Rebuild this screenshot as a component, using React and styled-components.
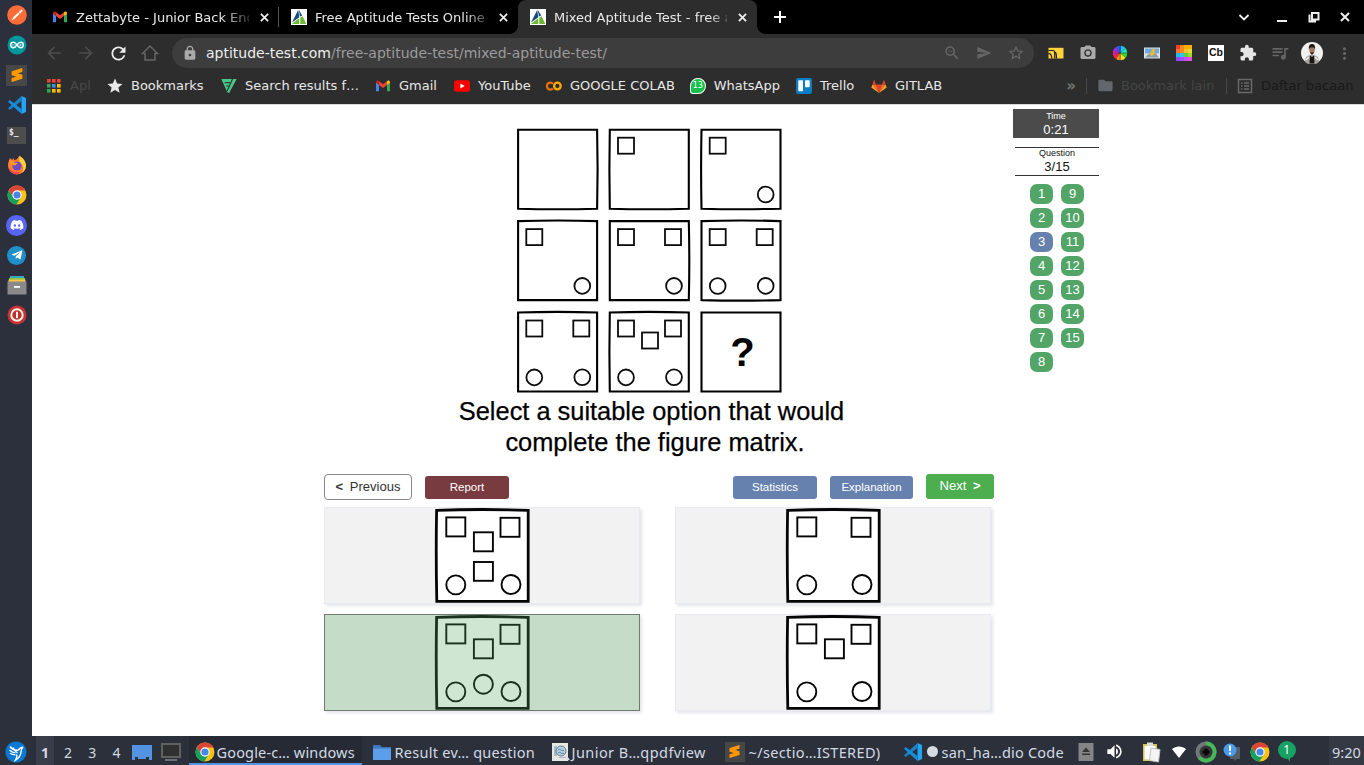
import React from "react";
import styled, { createGlobalStyle, css } from "styled-components";
import {
  MdSend, MdLock, MdStar, MdStarBorder, MdRefresh, MdArrowBack, MdArrowForward, MdCameraAlt,
  MdExtension, MdQueueMusic, MdMoreVert, MdFolder, MdVolumeUp, MdZoomOut,
} from "react-icons/md";
import { FaDiscord, FaTelegramPlane } from "react-icons/fa";
import { SiSublimetext } from "react-icons/si";

const GlobalStyle = createGlobalStyle`
  * { box-sizing: border-box; }
  body { margin: 0; background: #fff; overflow: hidden; }
  button { font: inherit; padding: 0; margin: 0; border: 0; background: none; color: inherit; }
  svg { display: block; flex: none; }
`;

/* ---------- desktop shell ---------- */
const Desktop = styled.div`
  width: 1364px;
  height: 765px;
  display: grid;
  grid-template: 736px 29px / 32px 1332px;
`;
const Dock = styled.nav`
  background: #2c303c;
  display: flex;
  flex-direction: column;
  align-items: center;
  padding-left: 1px;
`;
const DockItem = styled.div`
  height: 30px;
  display: grid;
  place-items: center;
`;
const Browser = styled.main`
  display: flex;
  flex-direction: column;
  font-family: "DejaVu Sans", sans-serif;
  font-size: 13px;
  color: #e8e8e8;
`;

/* ---------- browser chrome ---------- */
const TabStrip = styled.div`
  height: 34px;
  background: #000;
  display: flex;
  align-items: stretch;
  padding-left: 8px;
`;
const Tab = styled.div`
  width: 239px;
  display: flex;
  align-items: center;
  padding: 0 7px 0 12px;
  position: relative;
  ${(p) => p.$active && css`
    background: #2d2d2d;
    border-radius: 8px 8px 0 0;
    &::before, &::after {
      content: "";
      position: absolute;
      bottom: 0;
      width: 8px;
      height: 8px;
    }
    &::before { left: -8px; background: radial-gradient(circle at 0 0, transparent 7.5px, #2d2d2d 8px); }
    &::after { right: -8px; background: radial-gradient(circle at 100% 0, transparent 7.5px, #2d2d2d 8px); }
  `}
  ${(p) => p.$divider && css`
    background: linear-gradient(#555, #555) right center / 1px 20px no-repeat;
  `}
`;
const TabTitle = styled.span`
  width: 175px;
  margin-left: 8px;
  overflow: hidden;
  white-space: nowrap;
  mask-image: linear-gradient(90deg, #000 ${(p) => p.$fade}px, transparent 180px);
`;
const TabClose = styled.button`
  width: 16px;
  height: 16px;
  margin-left: 7px;
  display: grid;
  place-items: center;
`;
const NewTab = styled.button`
  width: 22px;
  margin-left: 12px;
  display: grid;
  place-items: center;
`;
const WindowButtons = styled.div`
  margin-left: auto;
  display: flex;
  align-items: center;
  padding-right: 1px;
`;
const WindowButton = styled.button`
  width: ${(p) => p.$width}px;
  display: grid;
  place-items: center;
`;
const Toolbar = styled.div`
  height: 38px;
  background: #2d2d2d;
  display: flex;
  align-items: center;
  padding: 0 3px 0 6px;
`;
const ToolButton = styled.button`
  width: 32px;
  height: 32px;
  flex: none;
  display: grid;
  place-items: center;
  color: ${(p) => p.$color || "#555"};
`;
const AddressBar = styled.div`
  width: 862px;
  height: 30px;
  margin: 0 6px;
  border-radius: 15px;
  background: #3d3d3d;
  display: flex;
  align-items: center;
  padding: 0 2px 0 10px;
  font-size: 14px;
  color: #9b9b9b;
`;
const Url = styled.span`
  margin-left: 8px;
  flex: 1;
  white-space: nowrap;
`;
const Host = styled.span`color: #eee;`;
const BookmarkBar = styled.div`
  height: 32px;
  background: #2d2d2d;
  display: flex;
  align-items: center;
  gap: 16px;
  padding: 0 12px 5px 14px;
`;
const Bookmark = styled.a`
  display: flex;
  align-items: center;
  gap: 8px;
  white-space: nowrap;
  color: ${(p) => p.$color || "#e8e8e8"};
  ${(p) => p.$width && css`width: ${p.$width}px;`}
`;
const BookmarkEnd = styled.div`
  margin-left: auto;
  display: flex;
  align-items: center;
  gap: 10px;
  color: #777;
`;
const Overflow = styled.span`
  font-size: 15px;
  font-weight: 700;
  line-height: 16px;
`;
const Rule = styled.i`
  width: 1px;
  height: 16px;
  background: #484848;
`;

/* ---------- page ---------- */
const Page = styled.section`
  flex: 1;
  border-top: 1px solid #d8d8d8;
  background: #fff;
  display: flex;
  align-items: flex-start;
  padding-left: 292px;
  font-family: "Liberation Sans", Arial, sans-serif;
  color: #111;
`;
const Quiz = styled.div`
  width: 670px;
  padding-top: 22px;
`;
const Matrix = styled.div`
  padding-left: 191px;
  height: 269px;
`;
const Prompt = styled.p`
  margin: 0 0 0 -15px;
  font-size: 25.4px;
  line-height: 31px;
  text-align: center;
  color: #000;
  -webkit-text-stroke: 0.25px #000;
`;
const PromptLine = styled.span`
  display: block;
  padding-left: ${(p) => p.$indent || 0}px;
`;
const Actions = styled.div`
  margin-top: 16px;
  height: 26px;
  display: flex;
  align-items: center;
  gap: 13px;
`;
const Button = styled.button`
  width: ${(p) => p.$width || 84}px;
  height: 23px;
  border-radius: 3px;
  font-size: 11.5px;
  color: #fff;
  background: ${(p) => p.$bg || "#6681ae"};
`;
const PreviousButton = styled(Button)`
  height: 26px;
  border: 1px solid #888;
  border-radius: 4px;
  background: #fff;
  color: #333;
  font-size: 13px;
  word-spacing: 3px;
  padding-bottom: 2px;
`;
const NextButton = styled(Button)`
  height: 25px;
  margin-bottom: 1px;
  font-size: 13px;
  word-spacing: 3px;
  padding-bottom: 2px;
`;
const Spacer = styled.div`flex: 1;`;
const Options = styled.div`
  margin-top: 7px;
  display: grid;
  grid-template-columns: 316px 316px;
  gap: 10px 35px;
`;
const Option = styled.button`
  height: 97px;
  display: grid;
  place-items: center;
  background: #f2f2f2;
  border: 1px solid #e9eaf0;
  box-shadow: 2px 2px 3px rgba(60, 70, 110, 0.14);
  position: relative;
  ${(p) => p.$selected && css`
    border-color: #6f7a70;
    &::after {
      content: "";
      position: absolute;
      inset: 0;
      background: rgba(80, 165, 95, 0.28);
    }
  `}
`;
const Status = styled.aside`
  margin-left: 19px;
  width: 86px;
  padding-top: 4px;
  display: flex;
  flex-direction: column;
`;
const StatusBox = styled.div`
  height: 29px;
  text-align: center;
  font-size: 13px;
  line-height: 14px;
  ${(p) => p.$dark
    ? css`background: #4b4b4b; color: #fff;`
    : css`margin: 9px 0 0 2px; border: solid #333; border-width: 1px 0; line-height: 18px;`}
`;
const StatusLabel = styled.div`
  font-size: 9px;
  line-height: ${(p) => p.$line || 14}px;
`;
const QuestionList = styled.div`
  margin: 8px 0 0 17px;
  display: grid;
  grid-auto-flow: column;
  grid-template-rows: repeat(8, 20px);
  grid-template-columns: 23px 23px;
  gap: 4px 8px;
`;
const QuestionBadge = styled.button`
  border-radius: 7px;
  background: ${(p) => (p.$current ? "#6681ae" : "#53a567")};
  color: #fff;
  font-size: 13px;
  line-height: 20px;
`;

/* ---------- taskbar ---------- */
const Taskbar = styled.footer`
  grid-column: 1 / 3;
  background: #2b303b;
  display: flex;
  align-items: stretch;
  padding-left: 5px;
  font-family: "Noto Sans", sans-serif;
  font-size: 14px;
  color: #d3dae3;
`;
const Slot = styled.div`
  width: ${(p) => p.$width}px;
  margin-left: ${(p) => p.$before || 0}px;
  padding-top: 2px;
  flex: none;
  display: grid;
  place-items: center;
`;
const Workspace = styled(Slot)`
  width: 24.2px;
  padding-top: 4px;
  ${(p) => p.$active && css`
    width: 18px;
    margin-right: 2px;
    font-weight: 700;
    background: #383d49;
  `}
`;
const Task = styled.div`
  width: ${(p) => p.$width}px;
  flex: none;
  display: flex;
  align-items: center;
  padding: 4px 0 0 6px;
  white-space: nowrap;
  letter-spacing: ${(p) => p.$spacing || 0}px;
  border-bottom: 2px solid ${(p) => (p.$active ? "#5294e2" : "transparent")};
  background: ${(p) => (p.$active ? "#262a34" : "transparent")};
`;
const TaskLabel = styled.span`
  display: flex;
  align-items: center;
  margin-left: ${(p) => p.$gap || 3}px;
  font-size: 14.5px;
`;
const UnsavedDot = styled.i`
  width: 11px;
  height: 11px;
  margin-right: 4px;
  border-radius: 50%;
  background: #d3dae3;
`;
const Clock = styled.time`
  margin-left: auto;
  width: 35px;
  background: #343944;
  padding-left: 3px;
  font-size: 14.5px;
  line-height: 32px;
  white-space: nowrap;
`;

/* ---------- icons ---------- */
const Svg = ({ s = 16, w, h, v = 16, children }) => (
  <svg width={w || s} height={h || s} viewBox={`0 0 ${v} ${v}`} fill="none">{children}</svg>
);
const Gmail = () => (
  <Svg>
    <path d="M1 4v9.2h3V6.8z" fill="#4285f4" /><path d="M12 6.8v6.4h3V4z" fill="#34a853" />
    <path d="M12 3.2V7l3-2.3V4c0-1.4-1.5-1.9-2.4-1.2z" fill="#fbbc04" />
    <path d="M4 7V3.3l4 3 4-3V7l-4 3z" fill="#ea4335" /><path d="M1 4.6 4 7V3.3l-.6-.5C2.400 2.200 1 2.800 1 4z" fill="#c5221f" />
  </Svg>
);
const AptitudeLogo = () => (
  <Svg>
    <path d="M0 0h16v16H0z" fill="#fff" />
    <path d="M7.200 1 1 13.500 8.300 8.200z" fill="#164a7b" />
    <path d="M7.800 .8 8.900 7.400l2.300-.8z" fill="#164a7b" />
    <path d="M.8 15 8.200 9.300V15zM9.300 15V8.400l2.300-1.200L15.300 15z" fill="#6db833" />
  </Svg>
);
const Cross = ({ s = 9 }) => <Svg s={s} v={10}><path d="m1 1 8 8M9 1 1 9" stroke="#eee" strokeWidth="2" /></Svg>;
const HomeIcon = () => <Svg s={18} v={18}><path d="M1.500 9.500 9 2l7.500 7.500H14V16H4V9.500z" stroke="#666" strokeWidth="1.500" /></Svg>;
const Chrome = ({ s = 20 }) => (
  <Svg s={s} v={20}>
    <circle cx="10" cy="10" r="9.500" fill="#fbc116" />
    <path d="M10 .5A9.500 9.500 0 0 0 1.800 5.200L6.200 12 10 5.500h8.400A9.500 9.500 0 0 0 10 .5" fill="#dc4437" />
    <path d="M1.800 5.200A9.500 9.500 0 0 0 9.400 19.500L14 12l-4 2.500a5 5 0 0 1-4-2.500z" fill="#16a05d" />
    <circle cx="10" cy="10" r="4.700" fill="#fff" /><circle cx="10" cy="10" r="3.600" fill="#4587e8" />
  </Svg>
);
const Postman = () => (
  <Svg s={20} v={20}><circle cx="10" cy="10" r="9.800" fill="#ff6c37" />
    <path d="m4.500 15.500 2-3.500 4.700-4.400 1.400 1.400-4.700 4.600z" fill="#fff" />
    <path d="M11.700 7.200 14.700 4.300l1 1.500-2.600 2.700z" fill="#fff" />
  </Svg>
);
const Arduino = () => (
  <Svg s={20} v={20}><circle cx="10" cy="10" r="9.500" fill="#00979d" />
    <path d="M10 10C8.500 8 7.700 7.300 6.400 7.300a2.700 2.700 0 0 0 0 5.400c1.300 0 2.100-.7 3.600-2.700s2.300-2.700 3.600-2.700a2.700 2.700 0 0 1 0 5.400c-1.300 0-2.100-.7-3.600-2.700" stroke="#fff" strokeWidth="1.400" />
    <path d="M5.300 10h2.200m5 0h2.200m-1.100-1.100v2.200" stroke="#fff" strokeWidth=".7" />
  </Svg>
);
const Tile = styled.div`
  width: ${(p) => p.$size}px;
  height: ${(p) => p.$size}px;
  display: grid;
  place-items: center;
  background: #474747;
  color: #ff9800;
`;
const Sublime = ({ size = 20 }) => <Tile $size={size}><SiSublimetext size={size - 7} /></Tile>;
const Code = () => (
  <Svg s={20} v={20}>
    <path d="m14.500 1 4.500 2v14l-4.500 2z" fill="#24a5f2" />
    <path d="M14.500 1 1 13.200l1.700 1.800L14.500 6z" fill="#1b80c4" /><path d="M14.500 19 1 6.800 2.700 5l11.800 9z" fill="#168ddb" />
  </Svg>
);
const TerminalTile = styled.div`
  width: 19px;
  height: 17px;
  padding: 1px 0 0 2px;
  background: #4d4d4d;
  color: #eee;
  font: 700 8px/9px "DejaVu Sans Mono", monospace;
`;
const Firefox = () => (
  <Svg s={20} v={20}>
    <path d="M2 5.500 3 3l2 2 2-2v2.300c5-1 4-4 5.500-4.800C13 3 18.500 4.500 19 11a9 9 0 0 1-9 8.500A9 9 0 0 1 1 11c0-2 .3-4 1-5.500" fill="#ff812e" />
    <path d="M13 1c2.500 2 6 4.500 6 10 0 3-2 5.500-4 6.700 2-3 1.800-7-1.500-9.700-1.400-1.200-1.900-4.400-.5-7" fill="#ffcf3d" />
    <circle cx="10" cy="11" r="4.600" fill="#6f4bc1" /><path d="M2 6c2.500-.7 4 .3 5.500 1.800L11 8 8 10.500c-3 0-4-2-6-4.500" fill="#ff9a24" />
    <path d="M1.300 11.500c1.400 4.500 7 6.500 12.500 5A9 9 0 0 1 10 19.500a9 9 0 0 1-8.700-8" fill="#f5464e" />
  </Svg>
);
const Disc = styled.div`
  width: ${(p) => p.$size || 20}px;
  height: ${(p) => p.$size || 20}px;
  border-radius: 50%;
  background: ${(p) => p.$bg};
  color: #fff;
  display: grid;
  place-items: center;
`;
const Drawer = () => (
  <Svg s={20} v={20}><path d="M3 1h14v4H3z" fill="#36a8be" /><path d="M2 3h16v2H2z" fill="#8bc34a" /><path d="M1.500 4.600h17v2.400h-17z" fill="#f9c846" />
    <path d="M.5 6.500h19v13H.5z" fill="#8a8a8a" /><path d="M7 11h6v1.800H7z" fill="#fff" /></Svg>
);
const Power = () => (
  <Svg s={20} v={20}><circle cx="10" cy="10" r="9.500" fill="#c43338" /><circle cx="10" cy="10" r="5.700" fill="#b82f35" stroke="#fff4dc" strokeWidth="2" />
    <path d="M10 6.700v6.600" stroke="#fff4dc" strokeWidth="2" /></Svg>
);
const AppsGrid = () => (
  <Svg>{["#ea4335", "#ea4335", "#ea4335", "#34a853", "#4285f4", "#fbbc05", "#34a853", "#fbbc05", "#fbbc05"].map((c, i) => (
    <rect key={i} x={1 + (i % 3) * 5} y={1 + Math.floor(i / 3) * 5} width="3.600" height="3.600" fill={c} />
  ))}</Svg>
);
const GreenMark = () => (
  <Svg><path d="M.3 1h15.400L8 15.200 6.200 14z" fill="#48c78b" /><path d="m3.500 4.700 5.500-.1M5.200 8h3M11.500 1 6.200 13" stroke="#2d2d2d" strokeWidth="1.100" /></Svg>
);
const YouTube = () => <Svg><rect y="2.300" width="16" height="11.400" rx="2.700" fill="#f00" /><path d="m6.400 5.500 4.300 2.500-4.300 2.500z" fill="#fff" /></Svg>;
const Colab = () => <Svg><g strokeWidth="2.300"><path d="M7 5.700a3.500 3.500 0 1 0 0 4.700" stroke="#e8710a" /><circle cx="11.400" cy="8" r="3.300" stroke="#f9ab00" /></g></Svg>;
const WaMark = styled.div`
  width: 16px;
  height: 16px;
  border: 1.5px solid #fff;
  border-radius: 50% 50% 50% 3px;
  background: #17c04c;
  color: #fff;
  text-align: center;
  font: 8px/14px "DejaVu Sans", sans-serif;
`;
const Trello = () => <Svg><rect width="16" height="16" rx="2" fill="#0b7dc4" /><rect x="2.300" y="2.300" width="4.700" height="11" rx=".8" fill="#fff" /><rect x="9" y="2.300" width="4.700" height="7" rx=".8" fill="#fff" /></Svg>;
const GitLab = () => (
  <Svg><path d="m8 15 3-8.500H5z" fill="#e24329" /><path d="M8 15 1.500 6.500H5zM8 15l6.500-8.500H11z" fill="#fc6d26" />
    <path d="m1.500 6.500-1.200 3L8 15zM14.500 6.500l1.200 3L8 15z" fill="#fca326" /><path d="M3 1.500 1.500 6.500H5zM13 1.500l1.500 5H11z" fill="#e24329" /></Svg>
);
const ReadingList = () => <Svg><path d="M1.500 1.500h13v13h-13z" stroke="#6a6a6a" strokeWidth="1.500" /><path d="M4 5h1.500m1.500 0h5M4 8h1.500m1.500 0h5m-8 3h1.500m1.500 0h5" stroke="#6a6a6a" strokeWidth="1.300" /></Svg>;
const CastIcon = () => (
  <Svg><path d="M.5 2.800h15v10.700H.5z" fill="#ffd33d" /><path d="M.5 5.500h4.700c1 0 1.500.6 1.500 2v6M.5 8.300c2 .2 3.300 2 3.300 5.200M5.800 7.200c1.800-.9 2.700.3 2.700 6.300" stroke="#29230f" strokeWidth="1.200" /></Svg>
);
const ColorWheel = () => (
  <Svg>{["#1de9b6", "#16c7f5", "#2864f0", "#8a32e8", "#f022b8", "#f4283b", "#ff9820", "#f7e322", "#32d52f"].map((c, i) => {
    const a = ((8 - i) * 40 * Math.PI) / 180, b = ((9 - i) * 40 * Math.PI) / 180;
    return <path key={c} d={`M8 8L${8 + 7.300 * Math.cos(a)} ${8 + 7.300 * Math.sin(a)}A7.300 7.300 0 0 1 ${8 + 7.300 * Math.cos(b)} ${8 + 7.300 * Math.sin(b)}z`} fill={c} />;
  })}<path d="M8 0v16M0 8h16" stroke="#222" strokeWidth=".5" /></Svg>
);
const PictureIcon = () => <Svg><path d="M0 2.500h16v11H0z" fill="#d9e3ec" /><path d="M1 3.500h14v5H1z" fill="#78a9dd" /><path d="m1 12.500 4-4 3 2 3-3 4 5z" fill="#8e9ba0" /><path d="M6 9 9 3l2 2-1 5-3 1z" fill="#e8bc2d" /></Svg>;
const Palette = () => (
  <Svg>{["#ff3d2e", "#ff8a1e", "#ffb100", "#ffb100", "#ff7038", "#ff8a1e", "#ffbd2d", "#e2db32", "#26b8e8", "#35c3ed", "#5dd13d", "#a4d629", "#8e4bf2", "#a84bf2", "#c74cf2", "#e34ae8"].map((c, i) => (
    <rect key={i} x={(i % 4) * 4} y={Math.floor(i / 4) * 4} width="4" height="4" fill={c} />
  ))}</Svg>
);
const CbMark = styled.div`
  width: 16px;
  height: 16px;
  background: #fff;
  color: #111;
  text-align: center;
  font: 700 10.500px/15px "Liberation Sans", sans-serif;
`;
const Avatar = () => (
  <Svg s={22} v={22}><circle cx="11" cy="11" r="11" fill="#f2f1f1" /><path d="M4 20c.2-5 2-7 7-7s6.800 2 7 7a11 11 0 0 1-14 0" fill="#a79f9f" />
    <path d="m9 13.500 2 1.500 2-1.500.5 8h-5z" fill="#171717" /><ellipse cx="11" cy="8.300" rx="2.600" ry="4" fill="#a37761" />
    <path d="M8 8c-.6-4 .5-6 3-6s3.600 2 3 6l-1-2.500H9zM9 10.500h4L11 13z" fill="#211b1a" />
    <path d="m5 18 3-3m9 3-3-3" stroke="#f5eeee" strokeWidth="1.500" /></Svg>
);
const Lubuntu = () => (
  <Svg s={22} v={22}><circle cx="11" cy="11" r="10.600" fill="#0878d4" />
    <path d="M5 5.500c2 3 4.500 4 8 3.800 1.300-1.800 2.700-2.800 5-3.300-1.300 1-1.700 2-1.800 4-.3 4-2 7-5.700 9 1.300-2.300 1.700-4.300.8-5.500" stroke="#fff" strokeWidth="1.500" />
    <path d="M4.500 9c1.500 1.700 3.500 2.500 6 3M5 12.300c1.500 1 3.300 1.500 5.500 1.500M8 6.500c1 2.300 2.500 4 4.500 5.500" stroke="#fff" strokeWidth="1.200" />
  </Svg>
);
const DesktopIcon = () => <Svg s={22} v={22}><path d="M1 4h20v15h-3v-3h-3v2H7v-2H4v3H1z" fill="#5294e2" /></Svg>;
const MonitorIcon = () => <Svg s={22} v={22}><path d="M2 3h18v13H2z" fill="#303030" stroke="#606060" strokeWidth="2" /><path d="M5 19h12" stroke="#707070" strokeWidth="2" /></Svg>;
const FolderIcon = () => <Svg s={20} v={20}><path d="M1 3h7l2 2h9v13H1z" fill="#3d78be" /><path d="M1 6.500h18V18H1z" fill="#5c9eea" /></Svg>;
const PdfIcon = () => <Svg s={20} v={20}><path d="M2 1h16v18H2z" fill="#e7e7e3" /><path d="M4 4h3v10H4zM9 15h7v1H9z" fill="#a7bdcb" /><circle cx="11" cy="9" r="5" fill="#b2cfdf" stroke="#6b7e8a" /><path d="M8 8c2-2 4 2 6 0M8 11c2-2 4 2 6 0" stroke="#56839e" /><path d="m15 13 4 5" stroke="#ddd" strokeWidth="2" /></Svg>;
const EjectIcon = () => <Svg s={20} v={20}><path d="M2.500 1h15v18h-15z" fill="#858585" /><path d="m6 10 4-4.500 4 4.500zM6 11.500h8V13H6z" fill="#353535" /></Svg>;
const ClipboardIcon = () => <Svg s={22} v={22}><path d="M2 3h14v17H2z" fill="#d4c35a" /><path d="M3.500 5h11v13.500h-11z" fill="#fff" /><path d="M6 1.500h6v3.500H6z" fill="#ddd" /><path d="m10 7 9 1.500-1.500 12.500-9-1.500z" fill="#f4f4f4" stroke="#c2c2c2" /></Svg>;
const WifiIcon = () => <Svg s={16}><path d="M1 5c4-3.500 10-3.500 14 0l-7 9z" fill="#fff" /></Svg>;
const GreenDial = () => <Svg s={22} v={22}><circle cx="11" cy="11" r="10.500" fill="#72777b" /><path d="M11 .5a10.500 10.500 0 1 1-8 17.300L6 15a6.500 6.500 0 1 0 5-10.500z" fill="#45ba54" /><circle cx="11" cy="11" r="6.500" fill="#343737" /><path d="M11 7.500v7m-3.500-3.500h7" stroke="#000" strokeWidth="3" /></Svg>;
const NoticeIcon = () => <Svg s={20} v={20}><path d="M8 5h10v12h-3l-3 2v-2H8z" fill="#555c65" /><circle cx="8" cy="8" r="6.500" fill="#4a9ce8" /><path d="M8 3.500V9m0 1.500v2" stroke="#fff" strokeWidth="2" /></Svg>;
const BubbleMark = styled.div`
  width: 18px;
  height: 18px;
  margin-bottom: 3px;
  border-radius: 50%;
  background: #17a163;
  position: relative;
  text-align: center;
  font: 12px/18px "Noto Sans", sans-serif;
  color: #fff;
  &::after {
    content: "";
    position: absolute;
    left: 8px;
    top: 15px;
    border: solid transparent;
    border-width: 0 4px 6px 0;
    border-right-color: #17a163;
  }
`;

/* ---------- puzzle figures ---------- */
/* Marks sit in an 80x80 cell: tl/tr/bl/br corners and c upper centre. */
const MATRIX = [
  [[], ["tl"], ["tl", "br"]],
  [["tl", "br"], ["tl", "tr", "br"], ["tl", "tr", "bl", "br"]],
  [["tl", "tr", "bl", "br"], ["tl", "tr", "c", "bl", "br"], null],
];
/* Each frame bows outwards slightly on the listed sides. */
const BOWS = [["r", "b"], ["l", "b"], ["l", "b"], ["t"], ["r"], ["t", "b"], ["t"], ["t", "l"], []];
const framePath = (bows) => {
  const has = (side) => bows.includes(side);
  return `M0 0Q39.500 ${has("t") ? -1.200 : 0} 79 0Q${has("r") ? 80 : 79} 40 79 79Q39.500 ${has("b") ? 80 : 79} 0 79Q${has("l") ? -0.800 : 0} 40 0 0z`;
};
const MatrixFigure = () => (
  <svg width="270" height="270" viewBox="515 127 270 270" fill="none" stroke="#0c0c0c" strokeWidth="1.800">
    {MATRIX.map((row, r) => row.map((marks, c) => {
      const x = 518.100 + c * 91.700;
      const y = 129.700 + r * 91.400;
      return (
        <g key={`${r}${c}`} transform={`translate(${x} ${y})`}>
          <path d={framePath(BOWS[r * 3 + c])} strokeWidth="2.100" stroke="#000" />
          {marks ? marks.map((m) => {
            if (m === "bl") return <circle key={m} cx="16.200" cy="64.900" r="7.900" />;
            if (m === "br") return <circle key={m} cx="64.200" cy="64.800" r="7.900" />;
            const [mx, my] = { tl: [8.200, 8], tr: [55.200, 8], c: [32.200, 20] }[m];
            return <rect key={m} x={mx} y={my} width="16" height="16" />;
          }) : (
            <text x="41" y="39.800" dominantBaseline="central" textAnchor="middle" fill="#000" stroke="none" fontFamily="Liberation Sans" fontWeight="700" fontSize="40">?</text>
          )}
        </g>
      );
    }))}
  </svg>
);
const OptionFigure = ({ marks }) => (
  <svg width="96" height="95" viewBox="0 0 96 95" fill="none" stroke="#050505" strokeWidth="1.900">
    <path d="M2.600 2.400Q48 .6 94.200 2.400V93.300H2.800Q1.800 48 2.600 2.400z" fill="#fff" strokeWidth="2.800" />
    <rect x="12.300" y="9.400" width="19" height="19" />
    <rect x="66.500" y="9.800" width="19" height="19" />
    {marks.includes("c") && <rect x="39.900" y="24.300" width="19" height="19" />}
    {marks.includes("s") && <rect x="39.900" y="54" width="19" height="18.800" />}
    {marks.includes("o") && <circle cx="49.400" cy="69.200" r="9.500" />}
    <circle cx="21.800" cy="76.900" r="9.500" />
    <circle cx="77" cy="76.500" r="9.500" />
  </svg>
);

const TABS = [
  { title: "Zettabyte - Junior Back End", icon: <Gmail />, fade: 145, divider: true },
  { title: "Free Aptitude Tests Online", icon: <AptitudeLogo />, fade: 150 },
  { title: "Mixed Aptitude Test - free apt", icon: <AptitudeLogo />, fade: 155, active: true },
];
const BOOKMARKS = [
  { label: "Apl", icon: <AppsGrid />, color: "#484848", width: 45 },
  { label: "Bookmarks", icon: <MdStar size={18} style={{ margin: -1 }} />, width: 98 },
  { label: "Search results f…", icon: <GreenMark />, width: 138 },
  { label: "Gmail", icon: <Gmail />, width: 63 },
  { label: "YouTube", icon: <YouTube />, width: 76 },
  { label: "GOOGLE COLAB", icon: <Colab />, width: 128 },
  { label: "WhatsApp", icon: <WaMark>13</WaMark>, width: 90 },
  { label: "Trello", icon: <Trello />, width: 59 },
  { label: "GITLAB", icon: <GitLab /> },
];
const DOCK = [
  <Postman />, <Arduino />, <Sublime size={21} />, <Code />, <TerminalTile>$_</TerminalTile>, <Firefox />, <Chrome />,
  <Disc $bg="#5865f2" $size={21}><FaDiscord size={14} /></Disc>,
  <Disc $bg="#218fc9" $size={19}><FaTelegramPlane size={12} /></Disc>, <Drawer />, <Power />,
];
const OPTIONS = [["c", "s"], [], ["c", "o"], ["c"]];

export default function App() {
  return (
    <Desktop>
      <GlobalStyle />
      <Dock>{DOCK.map((icon, i) => <DockItem key={i}>{icon}</DockItem>)}</Dock>

      <Browser>
        <TabStrip>
          {TABS.map((t) => (
            <Tab key={t.title} $active={t.active} $divider={t.divider}>
              {t.icon}
              <TabTitle $fade={t.fade}>{t.title}</TabTitle>
              <TabClose><Cross /></TabClose>
            </Tab>
          ))}
          <NewTab><Svg s={12} v={12}><path d="M6 0v12M0 6h12" stroke="#fff" strokeWidth="2" /></Svg></NewTab>
          <WindowButtons>
            <WindowButton $width={38}><Svg s={12} v={12}><path d="m1.500 4 4.500 4.500L10.500 4" stroke="#eee" strokeWidth="1.800" /></Svg></WindowButton>
            <WindowButton $width={38}><Svg s={12} v={12}><path d="M1 10h10" stroke="#eee" strokeWidth="2" /></Svg></WindowButton>
            <WindowButton $width={26}><Svg s={12} v={12}><path d="M4 2h6.500v6.500H4zM1.500 3.500v7H8" stroke="#eee" strokeWidth="2" /></Svg></WindowButton>
            <WindowButton $width={36}><Cross s={10} /></WindowButton>
          </WindowButtons>
        </TabStrip>

        <Toolbar>
          <ToolButton $color="#4c4c4c"><MdArrowBack size={20} /></ToolButton>
          <ToolButton $color="#4c4c4c"><MdArrowForward size={20} /></ToolButton>
          <ToolButton $color="#eee"><MdRefresh size={21} /></ToolButton>
          <ToolButton><HomeIcon /></ToolButton>
          <AddressBar>
            <MdLock size={16} color="#aaa" />
            <Url><Host>aptitude-test.com</Host>/free-aptitude-test/mixed-aptitude-test/</Url>
            <ToolButton $color="#666"><MdZoomOut size={18} /></ToolButton>
            <ToolButton $color="#666"><MdSend size={16} /></ToolButton>
            <ToolButton $color="#666"><MdStarBorder size={18} /></ToolButton>
          </AddressBar>
          <ToolButton><CastIcon /></ToolButton>
          <ToolButton $color="#aaa"><MdCameraAlt size={18} /></ToolButton>
          <ToolButton><ColorWheel /></ToolButton>
          <ToolButton><PictureIcon /></ToolButton>
          <ToolButton><Palette /></ToolButton>
          <ToolButton><CbMark>Cb</CbMark></ToolButton>
          <ToolButton $color="#e6e6e6"><MdExtension size={18} /></ToolButton>
          <ToolButton $color="#646464"><MdQueueMusic size={20} /></ToolButton>
          <ToolButton><Avatar /></ToolButton>
          <ToolButton $color="#686868"><MdMoreVert size={19} /></ToolButton>
        </Toolbar>

        <BookmarkBar>
          {BOOKMARKS.map((b) => <Bookmark key={b.label} $color={b.color} $width={b.width}>{b.icon}{b.label}</Bookmark>)}
          <BookmarkEnd>
            <Overflow>»</Overflow><Rule />
            <Bookmark $color="#454545" $width={119}><MdFolder size={17} color="#63676b" style={{ marginRight: -1 }} />Bookmark lain</Bookmark><Rule />
            <Bookmark $color="#191919" $width={115}><ReadingList />Daftar bacaan</Bookmark>
          </BookmarkEnd>
        </BookmarkBar>

        <Page>
          <Quiz>
            <Matrix><MatrixFigure /></Matrix>
            <Prompt>
              <PromptLine>Select a suitable option that would</PromptLine>
              <PromptLine $indent={7}>complete the figure matrix.</PromptLine>
            </Prompt>
            <Actions>
              <PreviousButton $width={88}><b>&lt;</b> Previous</PreviousButton>
              <Button $bg="#783b40">Report</Button>
              <Spacer />
              <Button>Statistics</Button>
              <Button $width={83}>Explanation</Button>
              <NextButton $bg="#4cae4f" $width={68}>Next <b>&gt;</b></NextButton>
            </Actions>
            <Options>
              {OPTIONS.map((marks, i) => <Option key={i} $selected={i === 2}><OptionFigure marks={marks} /></Option>)}
            </Options>
          </Quiz>
          <Status>
            <StatusBox $dark><StatusLabel>Time</StatusLabel>0:21</StatusBox>
            <StatusBox><StatusLabel $line={10}>Question</StatusLabel>3/15</StatusBox>
            <QuestionList>
              {Array.from({ length: 15 }, (_, i) => <QuestionBadge key={i} $current={i === 2}>{i + 1}</QuestionBadge>)}
            </QuestionList>
          </Status>
        </Page>
      </Browser>

      <Taskbar>
        <Slot $width={22}><Lubuntu /></Slot>
        <Workspace $active $before={9}>1</Workspace>
        <Workspace>2</Workspace><Workspace>3</Workspace><Workspace>4</Workspace>
        <Slot $width={26}><DesktopIcon /></Slot>
        <Slot $width={32}><MonitorIcon /></Slot>
        <Slot $width={2} />
        <Task $active $width={173} $spacing={0.15}><Chrome /><TaskLabel $gap={2}>Google-c… windows</TaskLabel></Task>
        <Slot $width={4} />
        <Task $width={178} $spacing={0.26}><FolderIcon /><TaskLabel>Result ev… question</TaskLabel></Task>
        <Task $width={175} $spacing={0.43}><PdfIcon /><TaskLabel $gap={2}>Junior B…qpdfview</TaskLabel></Task>
        <Task $width={178} $spacing={0.35}><Sublime /><TaskLabel $gap={4}>~/sectio…ISTERED)</TaskLabel></Task>
        <Task $width={171} $spacing={0.2}><Code /><TaskLabel $gap={4}><UnsavedDot />san_ha…dio Code</TaskLabel></Task>
        <Slot $width={20} $before={8}><EjectIcon /></Slot>
        <Slot $width={20} $before={9}><MdVolumeUp size={19} color="#fff" /></Slot>
        <Slot $width={22} $before={16}><ClipboardIcon /></Slot>
        <Slot $width={16} $before={8}><WifiIcon /></Slot>
        <Slot $width={22} $before={8}><GreenDial /></Slot>
        <Slot $width={20} $before={5}><NoticeIcon /></Slot>
        <Slot $width={20} $before={8}><Chrome /></Slot>
        <Slot $width={18} $before={8}><BubbleMark>1</BubbleMark></Slot>
        <Clock>9:20</Clock>
      </Taskbar>
    </Desktop>
  );
}
